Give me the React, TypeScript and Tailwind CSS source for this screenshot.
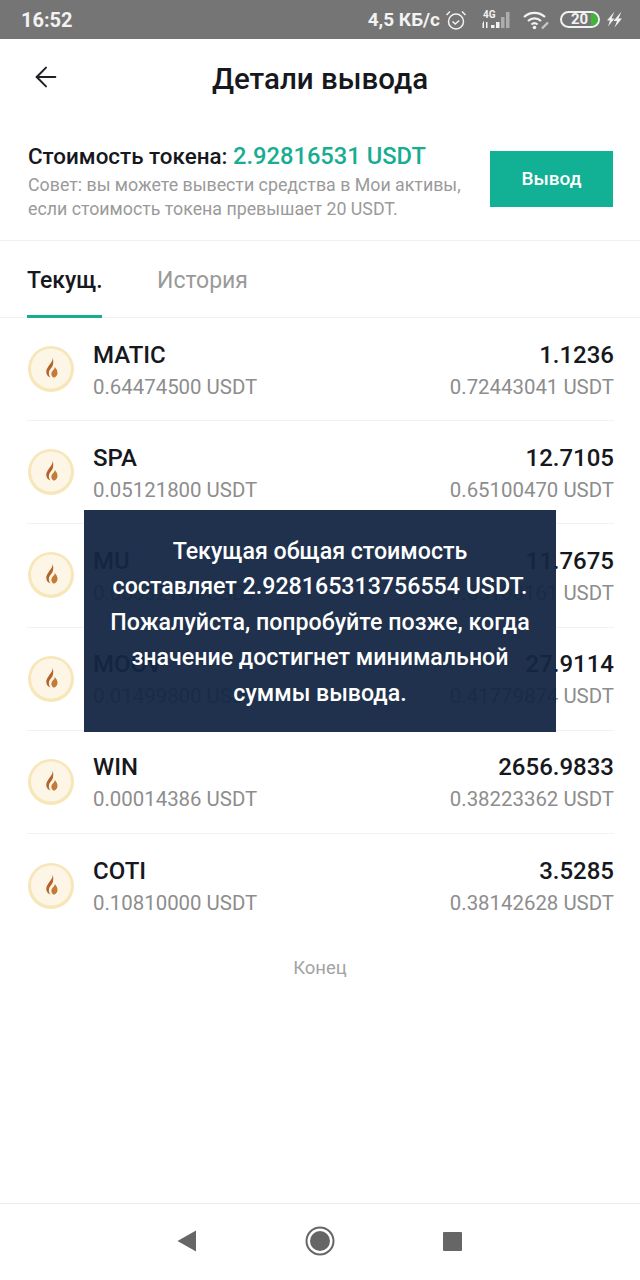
import { ArrowLeft } from 'lucide-react';

const tokens = [
  { name: 'MATIC', price: '0.64474500 USDT', amount: '1.1236', total: '0.72443041 USDT' },
  { name: 'SPA', price: '0.05121800 USDT', amount: '12.7105', total: '0.65100470 USDT' },
  { name: 'MU', price: '0.05532100 USDT', amount: '11.7675', total: '0.65100161 USDT' },
  { name: 'MOOV', price: '0.01499800 USDT', amount: '27.9114', total: '0.41779874 USDT' },
  { name: 'WIN', price: '0.00014386 USDT', amount: '2656.9833', total: '0.38223362 USDT' },
  { name: 'COTI', price: '0.10810000 USDT', amount: '3.5285', total: '0.38142628 USDT' },
];

function FlameBadge() {
  return (
    <svg width="48" height="48" viewBox="0 0 48 48" className="shrink-0">
      <circle cx="24" cy="24" r="23" fill="#f7e6b8" />
      <circle cx="24" cy="23.500" r="20" fill="#fdf6e7" />
      <path
        d="M25.500 12c.8 3.500-1.500 5.500-3.500 8.500-1.600 2.400-3 4.300-2.700 7 .3 2.600 2 4.300 4.200 5-1.500-1.700-2-3.700-1.500-5.800.5-2.200 2.200-3.400 3.300-5.200 1.200-2.400 1.300-6.300.2-9.500z"
        fill="#b3622a"
      />
      <path
        d="M27.800 22c-.1 1.800-1.300 2.700-2.400 4-1 1.300-1.300 2.800-.8 4.200.4 1.200 1.200 2.100 2.300 2.500 2-.6 3.500-2.300 3.600-4.500.1-2.500-1.100-4.300-2.700-6.200z"
        fill="#c47a38"
      />
    </svg>
  );
}

function StatusBar() {
  return (
    <div className="h-[39px] bg-[#757575] flex items-center justify-between pl-[21px] pr-[17px] text-[#f2f2f2]">
      <span className="text-[20px] font-bold leading-none">16:52</span>
      <div className="flex items-center">
        <span className="text-[19px] font-bold leading-none mr-[5px]">4,5 КБ/с</span>
        {/* будильник */}
        <svg width="22" height="22" viewBox="0 0 22 22" fill="none" stroke="#f2f2f2" strokeWidth="1.500" className="mr-[12px]">
          <circle cx="11" cy="12.500" r="7.500" />
          <path d="M7.500 12.500l2.700 2.500 4-3.500" />
          <path d="M1.500 6l3.500-3.500M20.500 6L17 2.500" />
        </svg>
        {/* сигнал */}
        <svg width="34" height="24" viewBox="0 0 34 24" className="mr-[10px]" fill="#f2f2f2">
          <text x="4" y="10" fontSize="10" fontWeight="700" fontFamily="Roboto, sans-serif">4G</text>
          <path d="M2 15h2v-1.500l1 0V20H3.500v-5z" />
          <rect x="7" y="14" width="1.500" height="6" />
          <rect x="12" y="17" width="3.500" height="3" />
          <rect x="17" y="14" width="3.500" height="6" />
          <rect x="22" y="9" width="3.500" height="11" opacity="0.45" />
          <rect x="27" y="4" width="3.500" height="16" opacity="0.45" />
        </svg>
        {/* wifi */}
        <svg width="27" height="20" viewBox="0 0 27 20" fill="none" stroke="#f2f2f2" strokeWidth="2.200" className="mr-[10px]">
          <path d="M1 7c6-5.500 15-5.500 21 0" />
          <path d="M5 11c3.800-3.500 9.200-3.500 13 0" />
          <path d="M8.500 14.500c2-1.800 4-1.800 6 0" />
          <circle cx="11.500" cy="17.500" r="1.800" fill="#f2f2f2" stroke="none" />
          <path d="M19 18.500l6-6" strokeWidth="2.400" strokeOpacity="0.65" />
        </svg>
        {/* батарея */}
        <div className="relative w-[40px] h-[17px] rounded-full border-2 border-[#f2f2f2] flex items-center justify-center mr-[6px] overflow-hidden">
          <span className="text-[15px] font-bold leading-none -ml-[1px]">20</span>
          <div className="absolute right-0 top-0 bottom-0 w-[7px] bg-[#3fb53a] rounded-r-full" />
        </div>
        <svg width="17" height="19" viewBox="0 0 17 18" fill="#f2f2f2">
          <path d="M8.500 1L1 10h3l-2 6 6.500-8H5.500z" />
          <path d="M15.500 1L7.500 10.500h3.500L8.500 17 16 8h-3.500z" />
        </svg>
      </div>
    </div>
  );
}

export default function App() {
  return (
    <div
      className="relative w-[640px] h-[1280px] bg-white flex flex-col overflow-hidden"
      style={{ fontFamily: 'Roboto, "Noto Sans", sans-serif' }}
    >
      <StatusBar />

      <div className="relative h-[81px] flex items-center justify-center">
        <ArrowLeft size={32} strokeWidth={1.500} className="absolute left-[30px] top-[22px] text-[#1f2126]" />
        <h1 className="text-[29.500px] font-medium text-[#16181d] leading-none">Детали вывода</h1>
      </div>

      {/* стоимость токена */}
      <div className="h-[121px] pl-[28px] pr-[27px] border-b border-[#f2f2f2] flex items-start justify-between">
        <div className="pt-[22px]">
          <div className="text-[22.400px] font-medium leading-[28px] text-[#16181d] whitespace-nowrap">
            Стоимость токена: <span className="text-[23.700px] text-[#17ad91]">2.92816531 USDT</span>
          </div>
          <div className="text-[17.800px] leading-[24px] text-[#9a9a9a] mt-[3px] whitespace-nowrap">
            Совет: вы можете вывести средства в Мои активы,
            <br />
            если стоимость токена превышает 20 USDT.
          </div>
        </div>
        <button className="mt-[31px] w-[123px] h-[56px] bg-[#12b094] text-white text-[19px] font-medium flex items-center justify-center">
          Вывод
        </button>
      </div>

      {/* вкладки */}
      <div className="h-[77px] px-[27px] border-b border-[#f2f2f2] flex items-stretch gap-[55px]">
        <div className="relative flex items-center pt-[2px] w-[75px]">
          <span className="text-[23px] font-medium text-[#16181d] leading-none">Текущ.</span>
          <div className="absolute left-0 right-0 -bottom-px h-[3px] bg-[#17ad91]" />
        </div>
        <div className="flex items-center pt-[2px]">
          <span className="text-[23px] text-[#9a9a9a] leading-none">История</span>
        </div>
      </div>

      {/* список токенов */}
      <div className="pl-[27px] pr-[26px]">
        {tokens.map((t, i) => (
          <div
            key={t.name}
            className={`h-[103.200px] flex items-center gap-[18px] ${i < tokens.length - 1 ? 'border-b border-[#f2f2f2]' : ''}`}
          >
            <FlameBadge />
            <div className="flex-1 min-w-0 flex justify-between pt-[2px]">
              <div>
                <div className="text-[24px] font-medium leading-[30px] text-[#16181d]">{t.name}</div>
                <div className="text-[20.400px] leading-[28px] text-[#8d8d8d] mt-[3px]">{t.price}</div>
              </div>
              <div className="text-right">
                <div className="text-[24px] font-medium leading-[30px] text-[#16181d]">{t.amount}</div>
                <div className="text-[20.400px] leading-[28px] text-[#8d8d8d] mt-[3px]">{t.total}</div>
              </div>
            </div>
          </div>
        ))}
      </div>

      <div className="text-center text-[18.500px] text-[#a3a3a3] leading-none mt-[22px]">Конец</div>

      <div className="flex-1" />

      {/* навигация */}
      <div className="h-[77px] border-t border-[#ececec] flex items-center justify-center pb-[1px]">
        <div className="flex items-center gap-[108px] pb-[1px]">
          <svg width="20" height="22" viewBox="0 0 20 22" fill="#666666" className="-ml-[1px]">
            <path d="M19 0.500V21.500L0.500 11z" />
          </svg>
          <svg width="30" height="30" viewBox="0 0 30 30">
            <circle cx="15" cy="15" r="13.500" fill="none" stroke="#666666" strokeWidth="2" />
            <circle cx="15" cy="15" r="10" fill="#666666" />
          </svg>
          <div className="w-[19px] h-[19px] bg-[#666666] rounded-[1px]" />
        </div>
      </div>

      {/* тост */}
      <div className="absolute left-[84px] top-[510px] w-[472px] h-[222px] pt-[3px] bg-[#132642]/[0.95] text-white text-[23.200px] leading-[35.500px] font-medium text-center flex items-center justify-center">
        <p className="whitespace-nowrap">
          Текущая общая стоимость
          <br />
          составляет 2.928165313756554 USDT.
          <br />
          Пожалуйста, попробуйте позже, когда
          <br />
          значение достигнет минимальной
          <br />
          суммы вывода.
        </p>
      </div>
    </div>
  );
}
